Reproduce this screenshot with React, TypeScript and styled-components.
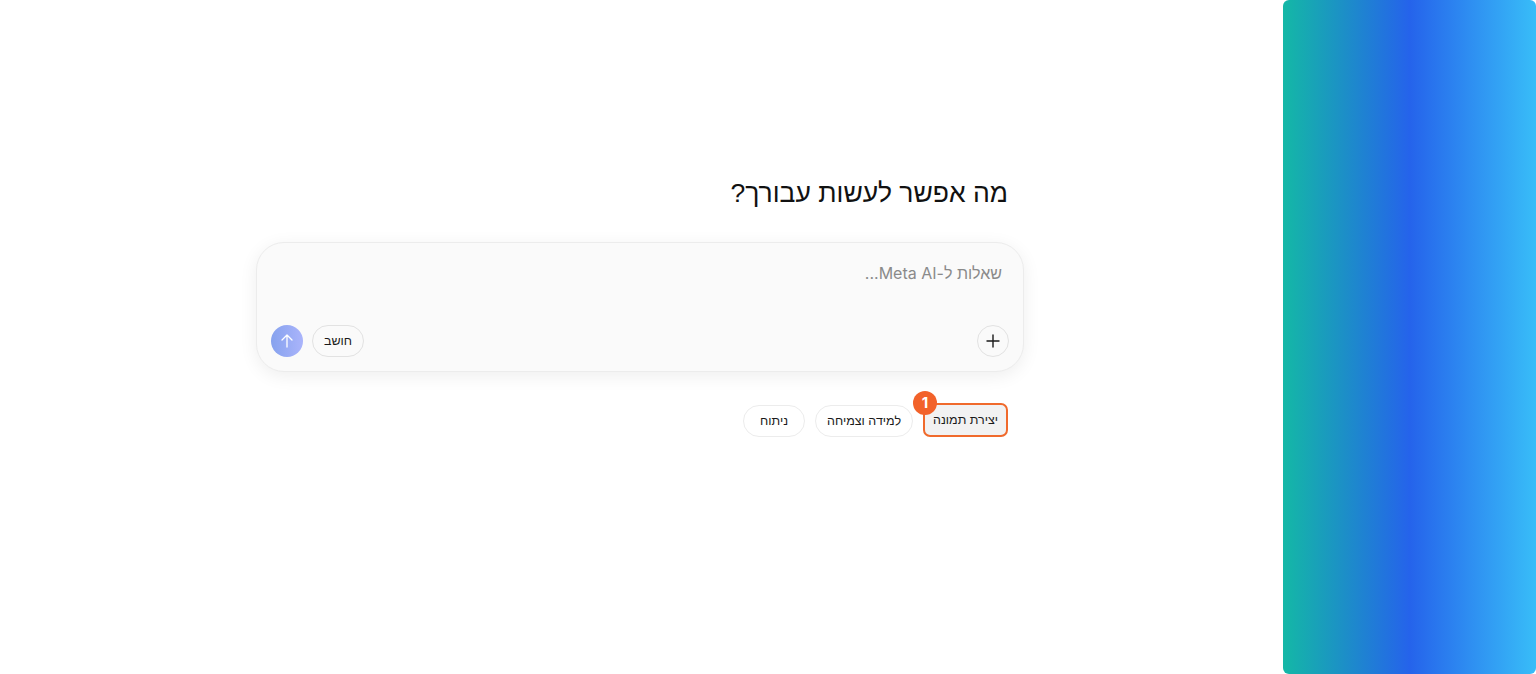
import React from 'react';
import styled, { createGlobalStyle } from 'styled-components';

const GlobalStyle = createGlobalStyle`
    html, body {
        margin: 0;
        padding: 0;
        background: #ffffff;
    }
    body {
        font-family: Inter, "Liberation Sans", "Noto Sans", sans-serif;
        color: #1c1c1c;
    }
`;

const StyledPage = styled.div`
    display: flex;
    width: 100vw;
    height: 674px;
    overflow: hidden;
`;

const StyledMain = styled.main`
    flex: 1;
    display: flex;
    flex-direction: column;
    align-items: center;
    padding: 175px 3px 0 0;
    direction: rtl;
`;

const StyledSidePanel = styled.aside`
    width: 253px;
    flex-shrink: 0;
    border-radius: 6px;
    background: linear-gradient(90deg, #14b8a6 0%, #2563eb 50%, #38bdf8 100%);
`;

const StyledHeading = styled.h1`
    width: 736px;
    margin: 0 0 31px;
    font-family: "Liberation Sans", Arial, sans-serif;
    font-size: 26.5px;
    font-weight: 400;
    line-height: 36px;
    color: #111;
`;

const StyledComposer = styled.div`
    width: 768px;
    height: 130px;
    box-sizing: border-box;
    padding: 18px 14px 14px;
    display: flex;
    flex-direction: column;
    justify-content: space-between;
    background: #fafafa;
    border: 1px solid #ececec;
    border-radius: 28px;
    box-shadow: 0 4px 18px rgba(0, 0, 0, 0.07);
`;

const StyledPlaceholder = styled.div`
    padding-right: 7px;
    font-size: 16px;
    line-height: 24px;
    color: #8a8a8a;
`;

const StyledComposerBar = styled.div`
    display: flex;
    align-items: center;
    justify-content: space-between;
`;

const StyledComposerGroup = styled.div`
    display: flex;
    align-items: center;
    gap: 9px;
`;

const StyledRoundButton = styled.button`
    width: 32px;
    height: 32px;
    padding: 0;
    border-radius: 50%;
    border: 1px solid #e2e2e2;
    background: #fafafa;
    display: flex;
    align-items: center;
    justify-content: center;
    color: #1a1a1a;
`;

const StyledSendButton = styled(StyledRoundButton)`
    border: none;
    background: linear-gradient(90deg, #86a2ee 0%, #aab4fb 100%);
    color: #ffffff;
`;

const StyledPill = styled.button`
    height: 32px;
    padding: 0 11px;
    border-radius: 16px;
    border: 1px solid #e2e2e2;
    background: #fafafa;
    font-family: "Liberation Sans", Arial, sans-serif;
    font-size: 12.5px;
    color: #1a1a1a;
`;

const StyledSuggestions = styled.div`
    width: 736px;
    margin-top: 33px;
    display: flex;
    gap: 10px;
`;

const StyledSuggestion = styled.button<{ $highlighted?: boolean }>`
    position: relative;
    min-width: 62px;
    height: ${(p) => (p.$highlighted ? '34px' : '32px')};
    padding: 0 ${(p) => (p.$highlighted ? '8px' : '11px')};
    border-radius: ${(p) => (p.$highlighted ? '7px' : '16px')};
    border: ${(p) => (p.$highlighted ? '2px solid #f06a2c' : '1px solid #ececec')};
    background: ${(p) => (p.$highlighted ? '#f2f2f2' : '#ffffff')};
    font-family: "Liberation Sans", Arial, sans-serif;
    font-size: 12.5px;
    color: #1a1a1a;
    margin-top: ${(p) => (p.$highlighted ? '-2px' : '0')};
`;

const StyledBadge = styled.span`
    position: absolute;
    top: -14px;
    left: -12px;
    width: 24px;
    height: 24px;
    border-radius: 50%;
    background: #f2622a;
    color: #ffffff;
    font-family: Inter, "Liberation Sans", sans-serif;
    font-size: 15px;
    font-weight: 700;
    line-height: 24px;
    text-align: center;
`;

const PlusIcon = () => (
    <svg width="16" height="16" viewBox="0 0 16 16" fill="none" stroke="currentColor" strokeWidth="1.4" strokeLinecap="round">
        <path d="M8 2v12M2 8h12" />
    </svg>
);

const ArrowUpIcon = () => (
    <svg width="16" height="16" viewBox="0 0 16 16" fill="none" stroke="currentColor" strokeWidth="1.3" strokeLinecap="round" strokeLinejoin="round">
        <path d="M8 14V2M3 7l5-5 5 5" />
    </svg>
);

const suggestions = [
    { label: 'יצירת תמונה', step: 1 },
    { label: 'למידה וצמיחה' },
    { label: 'ניתוח' },
];

export default function App() {
    return (
        <>
            <GlobalStyle />
            <StyledPage>
                <StyledMain>
                    <StyledHeading>מה אפשר לעשות עבורך?</StyledHeading>
                    <StyledComposer>
                        <StyledPlaceholder>שאלות ל-Meta AI...</StyledPlaceholder>
                        <StyledComposerBar>
                            <StyledRoundButton aria-label="הוספה">
                                <PlusIcon />
                            </StyledRoundButton>
                            <StyledComposerGroup>
                                <StyledPill>חושב</StyledPill>
                                <StyledSendButton aria-label="שליחה">
                                    <ArrowUpIcon />
                                </StyledSendButton>
                            </StyledComposerGroup>
                        </StyledComposerBar>
                    </StyledComposer>
                    <StyledSuggestions>
                        {suggestions.map((s) => (
                            <StyledSuggestion key={s.label} $highlighted={!!s.step}>
                                {s.label}
                                {s.step && <StyledBadge>{s.step}</StyledBadge>}
                            </StyledSuggestion>
                        ))}
                    </StyledSuggestions>
                </StyledMain>
                <StyledSidePanel />
            </StyledPage>
        </>
    );
}
